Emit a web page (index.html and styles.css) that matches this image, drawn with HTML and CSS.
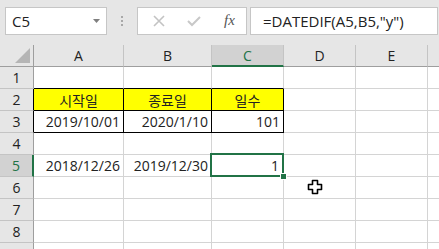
FILE: index.html
```html
<!DOCTYPE html>
<html>
<head>
  <title>DATEDIF</title>
  <link rel="stylesheet" href="styles.css">
</head>
<body>

  <div class="toolbar">
    <div class="namebox">
      <span>C5</span>
      <svg class="arrow" width="7" height="4" viewBox="0 0 7 4"><polygon points="0,0 7,0 3.5,4" fill="#7f7f7f"/></svg>
    </div>
    <div class="grip"><span></span><span></span><span></span></div>
    <div class="fxbox">
      <svg width="12" height="12" viewBox="0 0 12 12"><path d="M1 1 L11 11 M11 1 L1 11" stroke="#c3c3c3" stroke-width="1.6" fill="none"/></svg>
      <svg width="14" height="12" viewBox="0 0 14 12"><path d="M1 6 L5 10 L13 2" stroke="#c8c8c8" stroke-width="2" fill="none"/></svg>
      <span class="fx">fx</span>
    </div>
    <div class="formula">=DATEDIF(A5,B5,"y")</div>
  </div>

  <div class="sheet">
    <div class="cell corner"><svg width="15" height="15" viewBox="0 0 15 15"><polygon points="15,0 15,15 0,15" fill="#b5b5b5"/></svg></div>
    <div class="cell ch">A</div>
    <div class="cell ch">B</div>
    <div class="cell ch on">C</div>
    <div class="cell ch">D</div>
    <div class="cell ch">E</div>
    <div class="cell ch last"></div>

    <div class="cell rh">1</div>
    <div class="cell top"></div>
    <div class="cell top"></div>
    <div class="cell top"></div>
    <div class="cell"></div>
    <div class="cell"></div>
    <div class="cell last"></div>

    <div class="cell rh edge">2</div>
    <div class="cell box head">시작일</div>
    <div class="cell box head">종료일</div>
    <div class="cell box head">일수</div>
    <div class="cell"></div>
    <div class="cell"></div>
    <div class="cell last"></div>

    <div class="cell rh edge">3</div>
    <div class="cell box num">2019/10/01</div>
    <div class="cell box num">2020/1/10</div>
    <div class="cell box num">101</div>
    <div class="cell"></div>
    <div class="cell"></div>
    <div class="cell last"></div>

    <div class="cell rh">4</div>
    <div class="cell"></div>
    <div class="cell"></div>
    <div class="cell"></div>
    <div class="cell"></div>
    <div class="cell"></div>
    <div class="cell last"></div>

    <div class="cell rh on">5</div>
    <div class="cell num">2018/12/26</div>
    <div class="cell num">2019/12/30</div>
    <div class="cell num sel">1</div>
    <div class="cell"></div>
    <div class="cell"></div>
    <div class="cell last"></div>

    <div class="cell rh">6</div>
    <div class="cell"></div>
    <div class="cell"></div>
    <div class="cell"></div>
    <div class="cell"></div>
    <div class="cell"></div>
    <div class="cell last"></div>

    <div class="cell rh">7</div>
    <div class="cell"></div>
    <div class="cell"></div>
    <div class="cell"></div>
    <div class="cell"></div>
    <div class="cell"></div>
    <div class="cell last"></div>

    <div class="cell rh">8</div>
    <div class="cell"></div>
    <div class="cell"></div>
    <div class="cell"></div>
    <div class="cell"></div>
    <div class="cell"></div>
    <div class="cell last"></div>

    <div class="cell rh"></div>
    <div class="cell"></div>
    <div class="cell"></div>
    <div class="cell"></div>
    <div class="cell"></div>
    <div class="cell"></div>
    <div class="cell last"></div>

    <svg class="cursor" width="17" height="17" viewBox="0 0 17 17">
      <polygon points="5.5,1.5 10.5,1.5 10.5,5.5 14.5,5.5 14.5,10.5 10.5,10.5 10.5,14.5 5.5,14.5 5.5,10.5 1.5,10.5 1.5,5.5 5.5,5.5" fill="#fff" stroke="#000" stroke-width="1.6" stroke-linejoin="round"/>
    </svg>
  </div>

</body>
</html>
```

FILE: styles.css
```css
body {
  margin: 0;
  width: 439px;
  height: 249px;
  overflow: hidden;
  background-color: #e6e6e6;
  font-family: "Open Sans", "Noto Sans CJK KR", sans-serif;
  color: #222;
}

.toolbar {
  display: flex;
  align-items: center;
  height: 45px;
  padding: 0 0 4px 5px;
  box-sizing: border-box;
}

.namebox {
  display: flex;
  align-items: center;
  justify-content: space-between;
  width: 102px;
  height: 28px;
  padding: 0 6px 0 6px;
  box-sizing: border-box;
  background-color: #fff;
  border: 1px solid #c6c6c6;
  font-size: 15px;
}

.grip {
  display: flex;
  flex-direction: column;
  gap: 2px;
  margin: 0 14px 0 14px;
}

.grip span {
  width: 2px;
  height: 2px;
  background-color: #a8a8a8;
}

.fxbox {
  display: flex;
  align-items: center;
  width: 110px;
  height: 28px;
  padding: 0 0 0 15px;
  box-sizing: border-box;
  gap: 22px;
  background-color: #fff;
  border: 1px solid #c6c6c6;
}

.fx {
  margin-left: 1px;
  font-family: "Liberation Serif", serif;
  font-style: italic;
  font-size: 15px;
  color: #555;
}

.formula {
  display: flex;
  align-items: center;
  width: 188px;
  height: 28px;
  margin-left: 3px;
  padding-left: 12px;
  box-sizing: border-box;
  background-color: #fff;
  border: 1px solid #c6c6c6;
  font-size: 15px;
  white-space: nowrap;
}

.sheet {
  position: relative;
  display: grid;
  grid-template-columns: 34px 90px 88px 72px 72px 72px 11px;
  grid-auto-rows: 22px;
  background-color: #fff;
}

.cell {
  display: flex;
  align-items: center;
  box-sizing: border-box;
  border-right: 1px solid #d4d4d4;
  border-bottom: 1px solid #d4d4d4;
  font-size: 14px;
  white-space: nowrap;
}

.cell.last {
  border-right: none;
}

.corner {
  justify-content: flex-end;
  align-items: flex-end;
  padding: 0 3px 3px 0;
  background-color: #e6e6e6;
  border-right: 1px solid #9e9e9e;
  border-bottom: 1px solid #9e9e9e;
}

.ch {
  justify-content: center;
  background-color: #e6e6e6;
  border-right: 1px solid #c4c4c4;
  border-bottom: 1px solid #9e9e9e;
}

.ch.on {
  background-color: #d2d2d2;
  color: #217346;
  border-bottom: 2px solid #217346;
}

.rh {
  justify-content: center;
  background-color: #e6e6e6;
  border-right: 1px solid #9e9e9e;
  border-bottom: 1px solid #c4c4c4;
}

.rh.edge {
  border-right-color: #000;
}

.rh.on {
  background-color: #d2d2d2;
  color: #217346;
  border-right: 2px solid #217346;
}

.top {
  border-bottom-color: #000;
}

.box {
  border-right-color: #000;
  border-bottom-color: #000;
}

.head {
  justify-content: center;
  background-color: #ffff00;
}

.num {
  justify-content: flex-end;
  padding-right: 3px;
}

.sel {
  position: relative;
  padding-right: 4px;
}

.sel::before {
  content: "";
  position: absolute;
  top: -2px;
  left: -2px;
  right: -1px;
  bottom: -1px;
  border: 2px solid #217346;
}

.sel::after {
  content: "";
  position: absolute;
  right: -4px;
  bottom: -4px;
  width: 5px;
  height: 5px;
  background-color: #217346;
  border: 1px solid #fff;
}

.cursor {
  position: absolute;
  left: 307px;
  top: 134px;
}
```
